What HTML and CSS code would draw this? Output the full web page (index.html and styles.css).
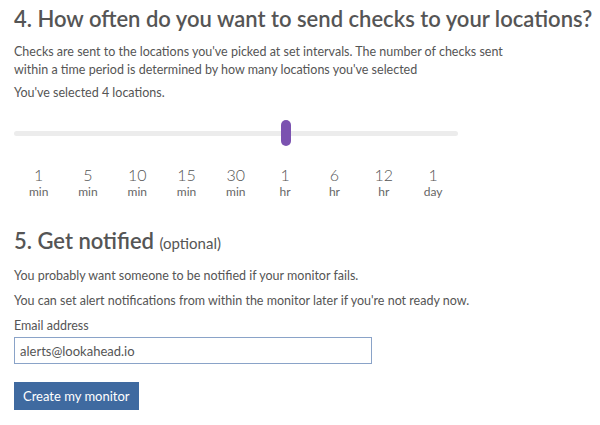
FILE: index.html
```html
<!DOCTYPE html>
<html>
<head>
<meta charset="utf-8">
<link rel="stylesheet" href="styles.css">
</head>
<body>
<section class="step">
  <h2 class="step-title">4. How often do you want to send checks to your locations?</h2>
  <p class="desc">Checks are sent to the locations you've picked at set intervals. The number of checks sent<br>within a time period is determined by how many locations you've selected</p>
  <p class="desc selected">You've selected 4 locations.</p>
  <div class="slider">
    <div class="track"></div>
    <div class="thumb"></div>
  </div>
  <div class="ticks">
    <div class="tick"><span class="num">1</span><span class="unit">min</span></div>
    <div class="tick"><span class="num">5</span><span class="unit">min</span></div>
    <div class="tick"><span class="num">10</span><span class="unit">min</span></div>
    <div class="tick"><span class="num">15</span><span class="unit">min</span></div>
    <div class="tick"><span class="num">30</span><span class="unit">min</span></div>
    <div class="tick"><span class="num">1</span><span class="unit">hr</span></div>
    <div class="tick"><span class="num">6</span><span class="unit">hr</span></div>
    <div class="tick"><span class="num">12</span><span class="unit">hr</span></div>
    <div class="tick"><span class="num">1</span><span class="unit">day</span></div>
  </div>
</section>
<section class="step">
  <h2 class="step-title notified">5. Get notified <span class="optional">(optional)</span></h2>
  <p class="desc line first">You probably want someone to be notified if your monitor fails.</p>
  <p class="desc line">You can set alert notifications from within the monitor later if you're not ready now.</p>
  <label class="desc line label" for="email">Email address</label>
  <div class="field"><input id="email" class="input" type="text" value="alerts@lookahead.io"></div>
  <button class="btn">Create my monitor</button>
</section>
</body>
</html>
```
FILE: styles.css
```css
html, body { margin: 0; padding: 0; background: #fff; }
body {
  padding: 0 14px;
  font-family: Lato, "Liberation Sans", sans-serif;
  color: #555;
}
.step-title {
  margin: 0;
  font-size: 22px;
  font-weight: 600;
  line-height: 30px;
  padding-top: 4px;
  color: #555;
  white-space: nowrap;
}
.desc {
  margin: 0;
  font-size: 12.5px;
  line-height: 18px;
}
.step-title + .desc { margin-top: 9px; }
.selected { margin-top: 5px; }
.slider {
  position: relative;
  width: 444px;
  height: 26px;
  margin-top: 18px;
  display: flex;
  align-items: center;
}
.track {
  width: 100%;
  height: 5px;
  border-radius: 3px;
  background: #ececec;
}
.thumb {
  position: absolute;
  left: 267px;
  top: 0;
  width: 10px;
  height: 26px;
  border-radius: 5px;
  background: #7b52b0;
}
.ticks {
  display: flex;
  margin-top: 20px;
}
.tick {
  width: 49.3px;
  display: flex;
  flex-direction: column;
  align-items: center;
  color: #555;
}
.num { font-size: 16px; line-height: 18px; font-weight: 300; }
.unit { font-size: 12px; line-height: 16px; font-weight: 400; color: #666; }
.notified { margin-top: 22px; }
.optional { font-size: 15px; font-weight: 400; }
.line { display: block; line-height: 18px; margin-bottom: 7px; }
.first { margin-top: 6px; }
.label { margin-bottom: 2px; }
.field { margin: 0; }
.input {
  box-sizing: border-box;
  width: 358px;
  height: 27px;
  border: 1px solid #8aa3c8;
  padding: 0 5px;
  font-family: inherit;
  font-size: 13px;
  color: #555;
  outline: none;
}
.btn {
  display: block;
  margin-top: 18px;
  height: 28px;
  padding: 0 9px;
  border: 0;
  background: #3f6aa0;
  color: #fff;
  font-family: inherit;
  font-size: 13px;
}
```
